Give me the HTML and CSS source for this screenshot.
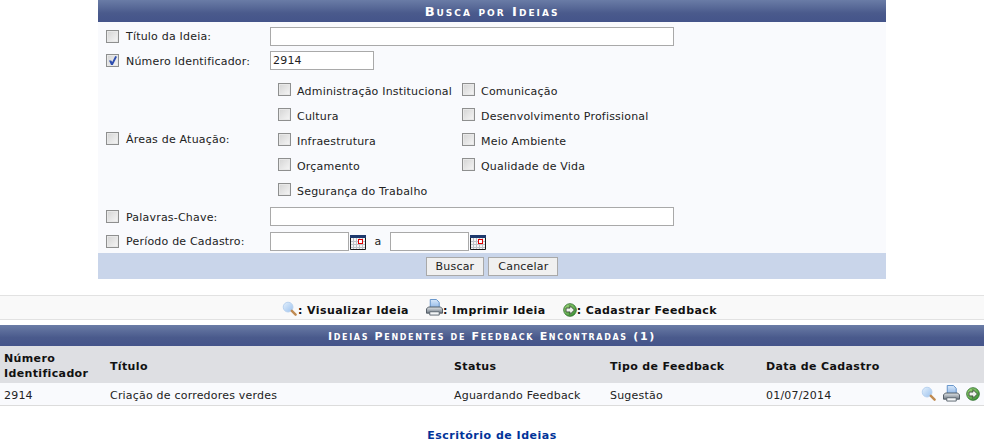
FILE: index.html
```html
<!DOCTYPE html>
<html lang="pt">
<head>
<meta charset="utf-8">
<title>Busca por Ideias</title>
<link rel="stylesheet" href="styles.css">
</head>
<body>
<svg class="defs" width="0" height="0" aria-hidden="true">
  <defs>
    <linearGradient id="lens" x1="0" y1="0" x2="1" y2="1"><stop offset="0" stop-color="#e4f0fc"/><stop offset="1" stop-color="#9cc2ee"/></linearGradient>
    <linearGradient id="paper" x1="0" y1="0" x2="0" y2="1"><stop offset="0" stop-color="#d8e8fa"/><stop offset="1" stop-color="#8fb6e6"/></linearGradient>
    <linearGradient id="body" x1="0" y1="0" x2="0" y2="1"><stop offset="0" stop-color="#e2e6ea"/><stop offset="1" stop-color="#6f7a84"/></linearGradient>
    <linearGradient id="go" x1="0" y1="0" x2="1" y2="1"><stop offset="0" stop-color="#a8dc80"/><stop offset="1" stop-color="#2f8a2c"/></linearGradient>
    <symbol id="i-zoom" viewBox="0 0 16 16">
      <circle cx="6.500" cy="6.500" r="5.200" fill="url(#lens)" stroke="#b4cfee"/>
      <path d="M10.500 10.500l4 4" stroke="#c08a50" stroke-width="2.600" stroke-linecap="round"/>
    </symbol>
    <symbol id="i-print" viewBox="0 0 18 18">
      <path d="M4.500 .5h6.500l3 3v6h-9.500z" fill="url(#paper)" stroke="#5f8fc8"/>
      <path d="M2.500 8.500h13l2 2v4.500h-17v-4.500z" fill="url(#body)" stroke="#4c5660"/>
      <path d="M4 13.500h10v3.500h-10z" fill="#f4f6f8" stroke="#5b6670"/>
    </symbol>
    <symbol id="i-go" viewBox="0 0 16 16">
      <circle cx="8" cy="8" r="7.200" fill="url(#go)" stroke="#2c6e2a"/>
      <path d="M8 3l5 5-5 5v-2.800h-4.500v-4.400h4.500z" fill="#eef2ec" stroke="#2f3d2f" stroke-width=".9"/>
    </symbol>
    <symbol id="i-cal" viewBox="0 0 16 15">
      <rect width="16" height="15" fill="#f6f6f6"/>
      <path d="M3.500 3v11M6.500 3v11M9.500 3v11M12.500 3v11M1 6.500h14M1 9.500h14M1 12.500h14" stroke="#bfc3c8"/>
      <rect width="16" height="3" fill="#1f3a6e"/>
      <path d="M.5 3v11.500h15V3" fill="none" stroke="#1a1a1a"/>
      <rect x="8.500" y="4.500" width="4" height="4" fill="#fff" stroke="#e00000"/>
    </symbol>
  </defs>
</svg>

<form class="search">
  <h2 class="search-title">Busca por Ideias</h2>
  <div class="search-body">
    <div class="row row-title">
      <label class="check"><input type="checkbox"><span>Título da Ideia:</span></label>
      <input class="field wide" type="text">
    </div>
    <div class="row row-number">
      <label class="check"><input type="checkbox" checked><span>Número Identificador:</span></label>
      <input class="field short" type="text" value="2914">
    </div>
    <div class="row row-areas">
      <label class="check"><input type="checkbox"><span>Áreas de Atuação:</span></label>
      <div class="areas">
        <label class="area"><input type="checkbox"><span>Administração Institucional</span></label>
        <label class="area"><input type="checkbox"><span>Comunicação</span></label>
        <label class="area"><input type="checkbox"><span>Cultura</span></label>
        <label class="area"><input type="checkbox"><span>Desenvolvimento Profissional</span></label>
        <label class="area"><input type="checkbox"><span>Infraestrutura</span></label>
        <label class="area"><input type="checkbox"><span>Meio Ambiente</span></label>
        <label class="area"><input type="checkbox"><span>Orçamento</span></label>
        <label class="area"><input type="checkbox"><span>Qualidade de Vida</span></label>
        <label class="area"><input type="checkbox"><span>Segurança do Trabalho</span></label>
      </div>
    </div>
    <div class="row row-keys">
      <label class="check"><input type="checkbox"><span>Palavras-Chave:</span></label>
      <input class="field wide" type="text">
    </div>
    <div class="row row-period">
      <label class="check"><input type="checkbox"><span>Período de Cadastro:</span></label>
      <div class="period">
        <input class="field date" type="text">
        <svg class="cal"><use href="#i-cal"/></svg>
        <span class="to">a</span>
        <input class="field date" type="text">
        <svg class="cal"><use href="#i-cal"/></svg>
      </div>
    </div>
  </div>
  <div class="search-foot">
    <button type="button" class="btn">Buscar</button>
    <button type="button" class="btn">Cancelar</button>
  </div>
</form>

<div class="legend">
  <span class="legend-item"><svg class="ic-zoom"><use href="#i-zoom"/></svg>: Visualizar Ideia</span>
  <span class="legend-item"><svg class="ic-print"><use href="#i-print"/></svg>: Imprimir Ideia</span>
  <span class="legend-item"><svg class="ic-go"><use href="#i-go"/></svg>: Cadastrar Feedback</span>
</div>

<section class="results">
  <h2 class="results-title">Ideias Pendentes de Feedback Encontradas (1)</h2>
  <table class="grid">
    <thead>
      <tr>
        <th class="c-num">Número Identificador</th>
        <th class="c-tit">Título</th>
        <th class="c-sta">Status</th>
        <th class="c-tip">Tipo de Feedback</th>
        <th class="c-dat">Data de Cadastro</th>
        <th class="c-act"></th>
      </tr>
    </thead>
    <tbody>
      <tr>
        <td>2914</td>
        <td>Criação de corredores verdes</td>
        <td>Aguardando Feedback</td>
        <td>Sugestão</td>
        <td>01/07/2014</td>
        <td class="actions"><svg class="ic-zoom"><use href="#i-zoom"/></svg><svg class="ic-print"><use href="#i-print"/></svg><svg class="ic-go"><use href="#i-go"/></svg></td>
      </tr>
    </tbody>
  </table>
</section>

<footer class="foot"><a href="#">Escritório de Ideias</a></footer>
</body>
</html>
```

FILE: styles.css
```css
* { box-sizing: border-box; }
html, body { margin: 0; padding: 0; }
body {
  background: #fff;
  color: #222;
  font-family: "DejaVu Sans", Verdana, sans-serif;
  font-size: 11px;
  letter-spacing: .2px;
  height: 446px;
  overflow: hidden;
}
.defs { position: absolute; }
svg { display: block; flex: none; }

.search { width: 788px; margin: 0 0 0 98px; }
.search-title, .results-title {
  margin: 0;
  color: #fff;
  font-weight: bold;
  text-align: center;
  font-variant: small-caps;
  background: linear-gradient(#6a7ca6 0, #4a5a8c 60%, #44548a 100%);
}
.search-title { height: 22px; line-height: 24px; font-size: 13px; letter-spacing: 2px; }
.results-title { height: 21px; line-height: 23px; font-size: 11px; letter-spacing: 1.65px; }
.search-body { background: #f9fafd; height: 231px; padding-top: 2px; }
.row { display: flex; align-items: center; padding-left: 8px; }
.row-title { height: 24px; }
.row-number { height: 25px; }
.row-areas { height: 131px; }
.row-keys { height: 25px; }
.row-period { height: 24px; }
.check { display: flex; align-items: center; width: 164px; }
.check span { padding-top: 1px; }
input[type=checkbox] {
  appearance: none;
  width: 13px;
  height: 13px;
  margin: 0 7px 0 0;
  flex: none;
  border: 1px solid #8e8f8f;
  background: linear-gradient(135deg, #d4d4d4, #f6f6f6);
  box-shadow: inset 0 0 0 1px #e8e8e8;
  position: relative;
}
input[type=checkbox]:checked::after {
  content: "";
  position: absolute;
  left: 2px;
  top: 1px;
  width: 8px;
  height: 9px;
  background: #2f4fb0;
  clip-path: polygon(0 50%, 28% 50%, 40% 68%, 78% 0, 100% 8%, 48% 100%, 25% 100%);
}
.field {
  height: 19px;
  border: 1px solid #a9a9a9;
  background: #fff;
  color: #222;
  font: 11px "DejaVu Sans", Verdana, sans-serif;
  letter-spacing: .2px;
  padding: 0 2px;
  outline: none;
}
.wide { width: 404px; }
.short { width: 104px; }
.date { width: 79px; }
.areas {
  display: grid;
  grid-template-columns: 184px auto;
  grid-auto-rows: 25px;
  align-self: flex-start;
  margin: 6px 0 0 8px;
  width: 400px;
}
.area { display: flex; align-items: center; }
.area input { margin-right: 6px; top: -2px; }
.period { display: flex; align-items: center; }
.cal { width: 16px; height: 15px; margin: 2px 0 0 1px; }
.to { width: 24px; text-align: center; }
.search-foot {
  height: 26px;
  background: #c9d5ea;
  display: flex;
  justify-content: center;
  align-items: center;
  gap: 4px;
}
.btn {
  height: 19px;
  padding: 0 9px;
  border: 1px solid #a9a9a9;
  background: #f0f0f0;
  color: #222;
  font: 11px "DejaVu Sans", Verdana, sans-serif;
  letter-spacing: .2px;
}

.legend {
  margin-top: 16px;
  height: 25px;
  background: #f9f9f9;
  border-top: 1px solid #e2e2e2;
  border-bottom: 1px solid #e2e2e2;
  display: flex;
  justify-content: center;
  align-items: center;
  gap: 17px;
  color: #111;
  font-weight: bold;
  letter-spacing: .42px;
  padding: 5px 0 0 15px;
}
.legend-item { display: flex; align-items: center; }
.ic-zoom { width: 15px; height: 15px; }
.ic-print { width: 17px; height: 17px; }
.ic-go { width: 14px; height: 14px; }
.legend-item .ic-zoom { margin: -4px 1px 0 0; }
.legend-item .ic-print { margin-top: -6px; }
.legend-item .ic-go { margin-top: -1px; }

.results { margin-top: 5px; }
.grid { width: 984px; border-collapse: collapse; table-layout: fixed; }
.grid th {
  background: #dedfe3;
  height: 37px;
  padding: 3px 4px 0;
  text-align: left;
  font-weight: bold;
  color: #111;
  line-height: 15px;
  letter-spacing: .36px;
}
.grid td {
  background: #f9fafd;
  height: 22px;
  padding: 3px 4px 0;
  border-bottom: 1px solid #dcdcdc;
}
.c-num { width: 106px; }
.c-tit { width: 344px; }
.c-sta { width: 156px; }
.c-tip { width: 156px; }
.c-dat { width: 152px; }
.grid td.actions { padding: 0 4px 0 0; text-align: right; white-space: nowrap; }
.actions svg { display: inline-block; vertical-align: middle; }
.actions .ic-print { margin: 0 6px 0 7px; }

.foot { margin-top: 23px; text-align: center; font-weight: bold; letter-spacing: .5px; }
.foot a { color: #003399; text-decoration: none; }
```
